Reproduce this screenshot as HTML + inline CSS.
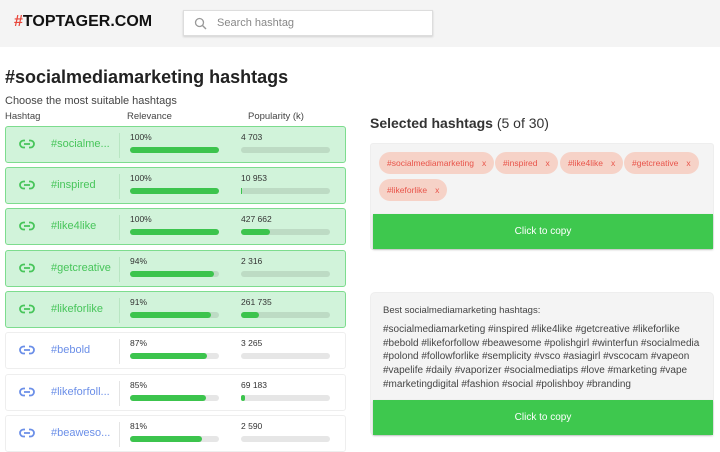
<!DOCTYPE html><html><head><style>
*{margin:0;padding:0;box-sizing:border-box}
body{width:720px;height:440px;overflow:hidden;background:#fff;font-family:"Liberation Sans",sans-serif;color:#333;position:relative}
.hdr{position:absolute;left:0;top:0;width:720px;height:47px;background:#f4f4f4}
.logo{position:absolute;left:14px;top:13px;font-size:16px;font-weight:bold;color:#111}
.logo span{color:#e8463a}
.search{position:absolute;left:183px;top:10px;width:250px;height:26px;background:#fff;border:1px solid #ddd;box-shadow:0 1px 2px rgba(0,0,0,.15)}
.search .t{position:absolute;left:33px;top:6px;font-size:11px;color:#888}
h1{position:absolute;left:5px;top:67px;font-size:18px;font-weight:bold;color:#222}
.sub{position:absolute;left:5px;top:95px;font-size:11px;color:#444}
.ch{position:absolute;top:111px;font-size:9.5px;color:#444}
.row{position:absolute;left:5px;width:341px;height:37px;border:1px solid #eee;border-radius:3px;background:#fff}
.row.sel{background:#d1f3da;border-color:#7ddc8e}
.row svg{position:absolute;left:13px;top:12px}
.row .n{position:absolute;left:45px;top:11px;font-size:11px;color:#6b8fe8}
.row.sel .n{color:#47c55a}
.row .dv{position:absolute;left:113px;top:6px;width:1px;height:25px;background:#e4e4e4}
.row.sel .dv{background:#b8e6c2}
.row .l{position:absolute;top:5px;font-size:8.5px;color:#333}
.bar{position:absolute;top:20px;width:89px;height:6px;border-radius:3px;background:#e6e6e6}
.row.sel .bar{background:#bddbc4}
.bar i{display:block;height:6px;border-radius:3px;background:#3cc44d}
.st{position:absolute;left:370px;top:115px;font-size:14px;font-weight:bold;color:#333}
.st span{font-weight:normal}
.box{position:absolute;left:370px;width:344px;background:#f4f4f4;border:1px solid #eee;border-radius:3px}
.tag{position:absolute;height:22px;border-radius:11px;background:#f6d2c7;color:#e8544a;font-size:8.5px;line-height:22px;padding:0 8px}
.tag b{font-weight:normal;margin-left:8px}
.btn{position:absolute;left:2px;width:340px;height:35px;background:#3ec84e;color:#fff;font-size:10px;text-align:center;line-height:35px;box-shadow:0 1px 2px rgba(0,0,0,.2)}
.bt{position:absolute;left:12px;top:12px;font-size:9.5px;color:#444}
.bl{position:absolute;left:12px;top:30px;width:325px;font-size:10px;line-height:13.7px;color:#444}
</style></head><body>
<div class="hdr"><div class="logo"><span>#</span>TOPTAGER.COM</div>
<div class="search"><svg style="position:absolute;left:10px;top:6px" width="13" height="13" viewBox="0 0 13 13"><circle cx="5.5" cy="5.5" r="4" fill="none" stroke="#999" stroke-width="1.3"/><path d="M8.5 8.5L12 12" stroke="#999" stroke-width="1.4"/></svg><div class="t">Search hashtag</div></div></div>
<h1>#socialmediamarketing hashtags</h1>
<div class="sub">Choose the most suitable hashtags</div>
<div class="ch" style="left:5px">Hashtag</div><div class="ch" style="left:127px">Relevance</div><div class="ch" style="left:248px">Popularity (k)</div>
<div id="rows"></div>
<div class="st">Selected hashtags <span>(5 of 30)</span></div>
<div class="box" style="top:143px;height:107px">
<div class="tag" style="left:8px;top:8px">#socialmediamarketing<b>x</b></div>
<div class="tag" style="left:124px;top:8px">#inspired<b>x</b></div>
<div class="tag" style="left:189px;top:8px">#like4like<b>x</b></div>
<div class="tag" style="left:253px;top:8px">#getcreative<b>x</b></div>
<div class="tag" style="left:8px;top:35px">#likeforlike<b>x</b></div>
<div class="btn" style="top:70px">Click to copy</div></div>
<div class="box" style="top:292px;height:144px;border-radius:5px">
<div class="bt">Best socialmediamarketing hashtags:</div>
<div class="bl">#socialmediamarketing #inspired #like4like #getcreative #likeforlike #bebold #likeforfollow #beawesome #polishgirl #winterfun #socialmedia #polond #followforlike #semplicity #vsco #asiagirl #vscocam #vapeon #vapelife #daily #vaporizer #socialmediatips #love #marketing #vape #marketingdigital #fashion #social #polishboy #branding</div>
<div class="btn" style="top:107px">Click to copy</div></div>
<script>
var d=[["#socialme...",100,"4 703",0,1],["#inspired",100,"10 953",1,1],["#like4like",100,"427 662",33,1],["#getcreative",94,"2 316",0,1],["#likeforlike",91,"261 735",20,1],["#bebold",87,"3 265",0,0],["#likeforfoll...",85,"69 183",5,0],["#beaweso...",81,"2 590",0,0]];
var tops=[126,167,208,250,291,332,374,415],h="";
d.forEach(function(r,i){var c=r[4]?"#47c55a":"#6b8fe8";
h+='<div class="row'+(r[4]?' sel':'')+'" style="top:'+tops[i]+'px"><svg width="16" height="10" viewBox="0 0 16 10"><path d="M6 1.5H4.5a3.5 3.5 0 0 0 0 7H6M10 1.5h1.5a3.5 3.5 0 0 1 0 7H10M5 5h6" fill="none" stroke="'+c+'" stroke-width="1.8"/></svg><div class="n">'+r[0]+'</div><div class="dv"></div><div class="l" style="left:124px">'+r[1]+'%</div><div class="bar" style="left:124px"><i style="width:'+r[1]+'%"></i></div><div class="l" style="left:235px">'+r[2]+'</div><div class="bar" style="left:235px"><i style="width:'+r[3]+'%;'+(r[3]==1?'width:1px;border-radius:0':'')+'"></i></div></div>'});
document.getElementById("rows").innerHTML=h;
</script>
</body></html>
